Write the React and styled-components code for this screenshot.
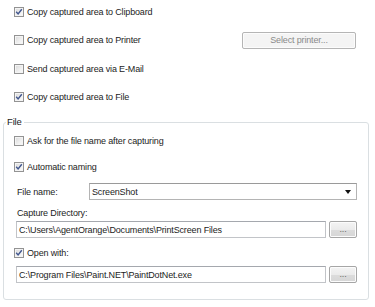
import React from 'react';
import styled, { createGlobalStyle } from 'styled-components';

const GlobalStyle = createGlobalStyle`
  html, body {
    margin: 0;
    padding: 0;
    background: #fff;
  }
  body {
    font-family: "Liberation Sans", Arial, sans-serif;
    font-size: 9px;
    letter-spacing: -0.15px;
    color: #1c1c1c;
  }
`;

const Page = styled.div`
  width: 375px;
  height: 307px;
  overflow: hidden;
  padding-top: 3px;
  box-sizing: border-box;
`;

const TopList = styled.div`
  display: flex;
  flex-direction: column;
  gap: 11.5px;
  padding: 0 19px 0 14px;
`;

const Row = styled.div`
  display: flex;
  align-items: center;
  height: 17px;
  margin-top: ${p => p.$mt || 0}px;
`;

const CheckRow = styled.label`
  display: flex;
  align-items: center;
  gap: 3px;
  height: 17px;
  flex: 1;
`;

const Box = styled.span`
  width: 10px;
  height: 10px;
  box-sizing: border-box;
  border: 1px solid #939393;
  background: linear-gradient(135deg, #d8d8d8 0%, #f0f0f0 60%, #fafafa 100%);
  box-shadow: inset 0 0 0 1px #f4f4f4;
  display: flex;
  align-items: center;
  justify-content: center;
  flex-shrink: 0;
`;

const Checkbox = ({ checked }) => (
  <Box>
    {checked && (
      <svg width="8" height="8" viewBox="0 0 8 8">
        <path d="M1.2 3.8 L3.1 6 L6.8 1.2" fill="none" stroke="#41568e" strokeWidth="1.4" />
      </svg>
    )}
  </Box>
);

const WinButton = styled.button`
  font: inherit;
  letter-spacing: inherit;
  height: 17px;
  width: ${p => p.$w}px;
  box-sizing: border-box;
  border: 1px solid ${p => (p.disabled ? '#b5b5b5' : '#a6a6a6')};
  border-radius: 2px;
  background: ${p =>
    p.disabled
      ? '#f4f4f4'
      : 'linear-gradient(#f4f4f4 0%, #ebebeb 50%, #dcdcdc 51%, #d6d6d6 100%)'};
  box-shadow: inset 0 0 0 1px #fcfcfc;
  color: ${p => (p.disabled ? '#8a8a8a' : '#6a6a6a')};
  padding: 0;
  flex-shrink: 0;
  line-height: 15px;
`;

const Group = styled.fieldset`
  margin: 10.5px 0 0 3px;
  width: 366px;
  box-sizing: border-box;
  border: 1px solid #dadfe2;
  border-radius: 3px;
  padding: 0 11px 16px 10px;
`;

const Legend = styled.legend`
  padding: 0 2px 0 1px;
  margin-left: -8px;
  line-height: 12px;
  font-size: 9.5px;
`;

const FieldLabel = styled.span`
  width: 75px;
  padding-left: 3px;
  box-sizing: border-box;
  flex-shrink: 0;
`;

const Caption = styled.div`
  height: 12px;
  line-height: 12px;
  padding-left: 3px;
  margin-top: ${p => p.$mt || 0}px;
`;

const Select = styled.div`
  flex: 1;
  height: 17px;
  box-sizing: border-box;
  border: 1px solid #b4b4b4;
  border-top-color: #9a9a9a;
  display: flex;
  align-items: center;
  padding: 0 5px 0 2px;
  background: #fff;
`;

const SelectText = styled.span`
  flex: 1;
`;

const Arrow = styled.span`
  width: 0;
  height: 0;
  border-left: 3px solid transparent;
  border-right: 3px solid transparent;
  border-top: 4px solid #111;
`;

const PathRow = styled.div`
  display: flex;
  align-items: center;
  gap: 3px;
  margin-top: ${p => p.$mt || 0}px;
  padding-left: 2px;
`;

const TextBox = styled.div`
  flex: 1;
  height: 17px;
  box-sizing: border-box;
  border: 1px solid #c2c4c8;
  border-top-color: #a5a8ae;
  display: flex;
  align-items: center;
  padding-left: 2px;
  white-space: nowrap;
  overflow: hidden;
`;

export default function App() {
  return (
    <>
      <GlobalStyle />
      <Page>
        <TopList>
          <Row>
            <CheckRow><Checkbox checked />Copy captured area to Clipboard</CheckRow>
          </Row>
          <Row>
            <CheckRow><Checkbox />Copy captured area to Printer</CheckRow>
            <WinButton $w={114} disabled>Select printer...</WinButton>
          </Row>
          <Row>
            <CheckRow><Checkbox />Send captured area via E-Mail</CheckRow>
          </Row>
          <Row>
            <CheckRow><Checkbox checked />Copy captured area to File</CheckRow>
          </Row>
        </TopList>

        <Group>
          <Legend>File</Legend>
          <Row $mt={4.5}>
            <CheckRow><Checkbox />Ask for the file name after capturing</CheckRow>
          </Row>
          <Row $mt={9}>
            <CheckRow><Checkbox checked />Automatic naming</CheckRow>
          </Row>
          <Row $mt={7.5}>
            <FieldLabel>File name:</FieldLabel>
            <Select>
              <SelectText>ScreenShot</SelectText>
              <Arrow />
            </Select>
          </Row>
          <Caption $mt={7}>Capture Directory:</Caption>
          <PathRow $mt={2}>
            <TextBox>C:\Users\AgentOrange\Documents\PrintScreen Files</TextBox>
            <WinButton $w={28}>...</WinButton>
          </PathRow>
          <Row $mt={6.5}>
            <CheckRow><Checkbox checked />Open with:</CheckRow>
          </Row>
          <PathRow $mt={4.5}>
            <TextBox>C:\Program Files\Paint.NET\PaintDotNet.exe</TextBox>
            <WinButton $w={28}>...</WinButton>
          </PathRow>
        </Group>
      </Page>
    </>
  );
}
